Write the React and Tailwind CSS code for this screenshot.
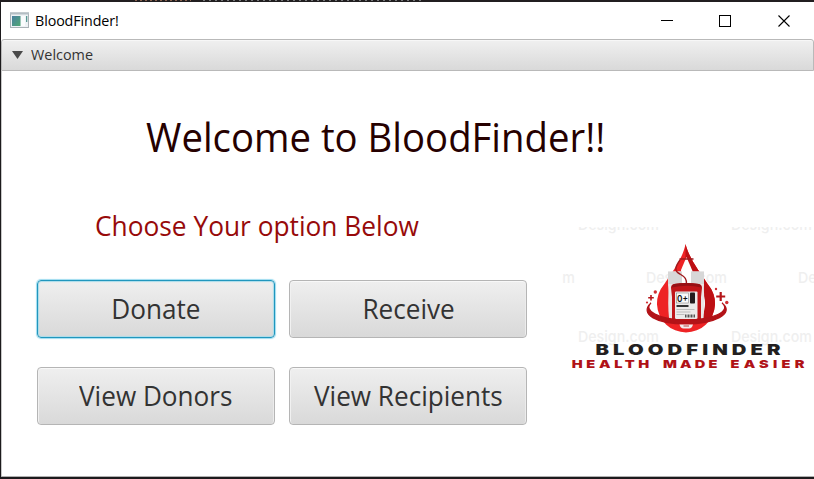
import React from "react";

const FONT = "font-['Open_Sans','Noto_Sans',sans-serif]";

function Label({ x, y, width, size, fill, children, family = "Open Sans", weight = 400 }) {
  return (
    <text
      x={x}
      y={y}
      textLength={width}
      lengthAdjust="spacingAndGlyphs"
      fontSize={size}
      fontFamily={`'${family}', sans-serif`}
      fontWeight={weight}
      fill={fill}
    >
      {children}
    </text>
  );
}

function AppIcon() {
  return (
    <svg className="ml-[8px] h-[17px] w-5 shrink-0" viewBox="0 0 20 17">
      <defs>
        <linearGradient id="pane" x1="0" y1="0" x2="1" y2="1">
          <stop offset="0" stopColor="#4a7fa0" />
          <stop offset="1" stopColor="#4fa873" />
        </linearGradient>
      </defs>
      <rect x="1.5" y="1" width="18" height="14.5" fill="#eef2f5" stroke="#a9b1b6" />
      <rect x="1" y="0.5" width="19" height="2" fill="#b4bec4" />
      <rect x="3" y="4" width="8.5" height="10" fill="url(#pane)" />
      <rect x="12" y="4" width="4" height="10" fill="#fafcfd" />
      <rect x="17" y="4" width="1.3" height="6" fill="#5a9a94" />
    </svg>
  );
}

function TitleBar() {
  return (
    <header className="flex h-[37px] shrink-0 items-center bg-white">
      <AppIcon />
      <span className="ml-[6px] origin-left scale-x-[0.985] text-[14.5px] leading-5 tracking-[-0.1px] text-black">
        BloodFinder!
      </span>
      <svg className="mr-[20px] ml-auto h-[14px] w-[136px] shrink-0" viewBox="0 0 136 14" fill="none" stroke="#000">
        <path d="M3 6.5h12" />
        <rect x="61.5" y="1.5" width="11" height="11" />
        <path d="M120.5 1.5l11 11M131.5 1.5l-11 11" strokeWidth="1.1" />
      </svg>
    </header>
  );
}

function OptionButton({ children, focused }) {
  return (
    <button
      className={
        "flex h-[58px] w-[238px] items-center justify-center rounded-[4px] border bg-linear-to-b from-[#efefef] to-[#d9d9d9] text-[27.5px] leading-none text-[#333] " +
        (focused
          ? "border-[#2096bd] shadow-[0_0_1px_1px_#9edcf0,inset_0_0_1px_1px_#a9dcea]"
          : "border-[#b5b5b5] shadow-[inset_0_1px_0_#f8f8f8,inset_1px_0_0_#f1f1f1,inset_-1px_0_0_#ececec]")
      }
    >
      <span className="scale-x-[0.95] whitespace-nowrap">{children}</span>
    </button>
  );
}

function Watermark({ x, y }) {
  return (
    <Label x={x} y={y} width={81} size={15} fill="#efefef" family="Inter" weight={500}>
      Design.com
    </Label>
  );
}

function WideWord({ x, y, width, size, fill, children }) {
  return (
    <g transform={`translate(${x} ${y}) scale(1.35 1)`}>
      <text
        fontFamily="Inter, sans-serif"
        fontWeight="900"
        fontSize={size}
        fill={fill}
        textLength={width / 1.35}
        lengthAdjust="spacing"
      >
        {children}
      </text>
    </g>
  );
}

const DROP = "M130.5 29C128 43 118 56 109 69.5A29 29 0 1 0 153 69.5C144 56 134 43 130.5 29Z";

function Logo() {
  return (
    <svg className="h-[165px] w-[259px] shrink-0" viewBox="0 0 259 165">
      <defs>
        <clipPath id="frame">
          <rect x="7" y="12" width="252" height="153" />
        </clipPath>
        <clipPath id="rightHalf">
          <rect x="130.5" y="25" width="35" height="78" />
        </clipPath>
      </defs>
      <g clipPath="url(#frame)">
        <Watermark x={23} y={14.5} />
        <Watermark x={176} y={14.5} />
        <Watermark x={-61} y={68} />
        <Watermark x={91} y={68} />
        <Watermark x={243} y={68} />
        <Watermark x={23} y={127} />
        <Watermark x={176} y={127} />
      </g>

      <path d={DROP} fill="#ee2325" />
      <path d={DROP} fill="#bd1014" clipPath="url(#rightHalf)" />
      <path d="M131.5 42L126 55L127 70H137L137.5 56Z" fill="#fff" />
      <path d="M146 74q8 14 0 30q-3-15 0-30z" fill="#fff" />

      <path d="M113 56.5h14v13h9v-13h13v13l-1 10v24h-34V79l-1-10z" fill="#f1f0f0" />
      <path d="M113 56.5h14v13h-14zM136 56.5h13v13h-13z" fill="#d7d7d7" />
      <path d="M114 69q-1.5 20 0 34l3.500 3V69zM148.500 69q1.500 20 0 34l-3.500 3V69z" fill="#ebe6e6" />
      <path d="M124.500 44h14M125 45c-5 7-6 11 0 14c5 3 7 5 6.500 11" fill="none" stroke="#a01a1d" strokeWidth="1.400" />

      <path d="M119 69q12-2 25 0q3 .5 3 4l-1 9v24q-14 3-29 0V82l-1-9q0-3.500 3-4z" fill="#c0161a" />
      <path d="M119 69q12-2 25 0q2 .5 2.500 3.500q-14-3.500-30 0q.5-3 2.500-3.500z" fill="#971115" />
      <rect x="120" y="76.500" width="22.500" height="27.500" rx="1" fill="#eceaea" />
      <rect x="121.500" y="78" width="12" height="10" fill="#fafafa" stroke="#777" strokeWidth="0.500" />
      <Label x={122} y={86.5} width={11} size={9.5} fill="#111" family="Inter" weight={600}>
        0+
      </Label>
      <rect x="135" y="77.500" width="5" height="11" rx="0.800" fill="#241c1e" />
      <rect x="121.500" y="90" width="12" height="2" fill="#333" />
      <path d="M121.500 94.500h18M121.500 97h14M121.500 99.500h8" stroke="#aaa" strokeWidth="0.700" />
      <path d="M130 101h10.500" stroke="#555" strokeWidth="3" strokeDasharray="1 0.500" />

      <path d="M96 88C88 95 103 105 131 105C158 105 177 96 167 88C181 99 158 109 131 109C101 109 84 99 96 88Z" fill="#b31318" stroke="#b31318" strokeWidth="1.200" />
      <path d="M124.500 109.500h13.500q-1 4-4 4h-5.500q-3 0-4-4z" fill="#f1eded" />
      <path d="M128.500 111h5.500" stroke="#b44" strokeWidth="1" />

      <g stroke="#b5171b">
        <path d="M96 80v5.500M93.200 82.700h5.600" strokeWidth="1.600" />
        <path d="M165.700 77v9M161.200 81.500h9" strokeWidth="2.200" />
      </g>
      <g fill="#d03034">
        <circle cx="100.300" cy="77" r="1.700" />
        <circle cx="92" cy="87.500" r="1.100" />
        <circle cx="161" cy="74" r="1.200" />
        <circle cx="171.800" cy="87.500" r="1.700" />
      </g>

      <WideWord x={40.5} y={139.8} width={185} size={15} fill="#231f20">BLOODFINDER</WideWord>
      <WideWord x={16.8} y={153} width={77.5} size={10.8} fill="#b01217">HEALTH</WideWord>
      <WideWord x={108} y={153} width={54.5} size={10.8} fill="#b01217">MADE</WideWord>
      <WideWord x={175.5} y={153} width={74} size={10.8} fill="#b01217">EASIER</WideWord>
    </svg>
  );
}

export default function App() {
  return (
    <div className={"flex h-[479px] w-[814px] flex-col overflow-hidden bg-[#1c1a1c] " + FONT}>
      <div className="flex h-[2px] shrink-0 items-start bg-[#211e20] pl-[135px]">
        <div className="h-px w-[56px] bg-[repeating-linear-gradient(90deg,#8a6350_0_2px,#211e20_2px_5px)]" />
        <div className="ml-[12px] h-px w-[218px] bg-[repeating-linear-gradient(90deg,#77787a_0_2px,#211e20_2px_6px)]" />
      </div>
      <div className="ml-px flex h-[475px] shrink-0 flex-col border-b border-[#b0b0b0] bg-white">
        <TitleBar />
        <div className="flex h-[32px] shrink-0 items-center rounded-t-[3px] border border-[#b9b9b9] bg-linear-to-b from-[#f0f0f0] to-[#d9d9d9] shadow-[inset_0_1px_0_#f7f7f7]">
          <svg className="ml-[10px] h-[8px] w-[11px]" viewBox="0 0 11 8">
            <path d="M0 0h11L5.500 8z" fill="#4a4a4a" />
          </svg>
          <span className="-mt-[2px] ml-[8px] origin-left scale-x-[0.96] text-[15px] leading-5 text-[#333]">Welcome</span>
        </div>
        <main className="flex flex-1 flex-col border-l border-[#c8c8c8]">
          <h1 className="mt-[36px] ml-[144px] h-[60px] w-fit origin-left scale-x-[0.958] text-[40px] leading-[60px] whitespace-nowrap text-[#260000]">
            Welcome to BloodFinder!!
          </h1>
          <div className="mt-[31px] flex">
            <div className="flex w-[526px] flex-col pl-[35px]">
              <h2 className="mt-[8px] ml-[58px] h-[40px] w-fit origin-left scale-x-[0.956] text-[27.500px] leading-[40px] whitespace-nowrap text-[#970a0a]">
                Choose Your option Below
              </h2>
              <div className="mt-[34px] grid grid-cols-[238px_238px] gap-x-[14.4px] gap-y-[29px]">
                <OptionButton focused>Donate</OptionButton>
                <OptionButton>Receive</OptionButton>
                <OptionButton>View Donors</OptionButton>
                <OptionButton>View Recipients</OptionButton>
              </div>
            </div>
            <div className="mt-[17px] ml-[27px] shrink-0">
              <Logo />
            </div>
          </div>
        </main>
      </div>
    </div>
  );
}
